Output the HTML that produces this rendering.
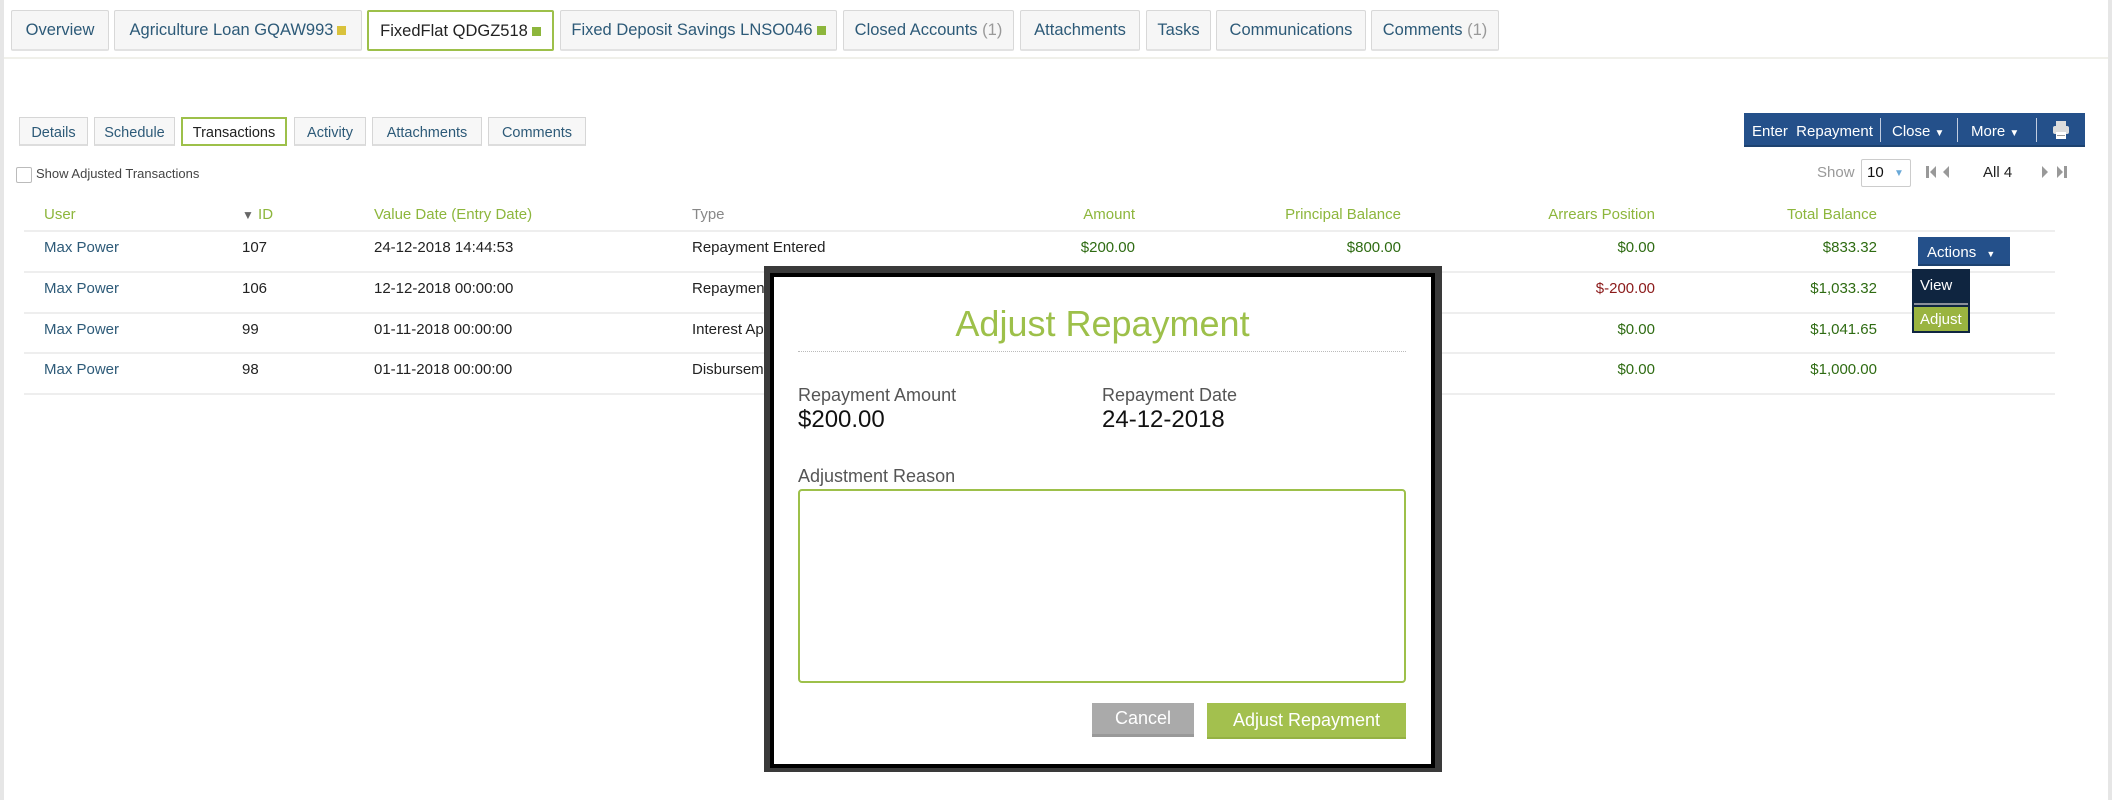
<!DOCTYPE html>
<html><head><meta charset="utf-8"><style>
*{box-sizing:border-box;margin:0;padding:0}
body{width:2112px;height:800px;background:#fff;font-family:"Liberation Sans",sans-serif;position:relative;overflow:hidden}
.a{position:absolute;white-space:nowrap}
.tab{position:absolute;top:10px;height:41px;border:1px solid #d8d8d8;border-bottom:2px solid #e2e2e2;background:#f6f6f6;color:#2d5a78;font-size:16.5px;line-height:39px;text-align:center;border-radius:2px}
.tab.on{background:#fff;border:2px solid #9dc04a;color:#222}
.sq{display:inline-block;width:9px;height:9px;margin-left:4px;vertical-align:0}
.st{position:absolute;top:117px;height:29px;border:1px solid #d6d6d6;border-bottom:2px solid #ddd;background:#f7f7f7;color:#2d5a78;font-size:14.5px;line-height:26px;padding-top:2px;text-align:center}
.st.on{background:#fff;border:2px solid #9dc04a;color:#222;padding-top:1px}
.sq{}
.h{position:absolute;top:206px;font-size:15px;color:#8db63c}
.c{position:absolute;font-size:15px;color:#222}
.u{color:#2d5a78}
.g{color:#2e6b12}
.r{text-align:right}
.ln{position:absolute;left:24px;width:2031px;height:2px;background:#eee}
</style></head><body>
<div class="a" style="left:0;top:0;width:4px;height:800px;background:#e6e6e6"></div>
<div class="a" style="left:2108px;top:0;width:4px;height:800px;background:#e6e6e6"></div>
<div class="tab" style="left:11px;width:98px">Overview</div>
<div class="tab" style="left:114px;width:248px">Agriculture Loan GQAW993<span class="sq" style="background:#d9c23c"></span></div>
<div class="tab on" style="left:367px;width:187px">FixedFlat QDGZ518<span class="sq" style="background:#8db63c"></span></div>
<div class="tab" style="left:560px;width:277px">Fixed Deposit Savings LNSO046<span class="sq" style="background:#8db63c"></span></div>
<div class="tab" style="left:843px;width:171px">Closed Accounts <span style="color:#999">(1)</span></div>
<div class="tab" style="left:1020px;width:120px">Attachments</div>
<div class="tab" style="left:1146px;width:65px">Tasks</div>
<div class="tab" style="left:1216px;width:150px">Communications</div>
<div class="tab" style="left:1371px;width:128px">Comments <span style="color:#999">(1)</span></div>
<div class="a" style="left:4px;top:57px;width:2104px;height:2px;background:#f0f0ea"></div>

<div class="st" style="left:19px;width:69px">Details</div>
<div class="st" style="left:94px;width:81px">Schedule</div>
<div class="st on" style="left:181px;width:106px">Transactions</div>
<div class="st" style="left:294px;width:72px">Activity</div>
<div class="st" style="left:372px;width:110px">Attachments</div>
<div class="st" style="left:488px;width:98px">Comments</div>

<div class="a" style="left:16px;top:167px;width:16px;height:16px;border:1px solid #bbb;border-radius:2px;background:#fff"></div>
<div class="a" style="left:36px;top:166px;font-size:13px;color:#444">Show Adjusted Transactions</div>

<div class="a" style="left:1744px;top:113px;width:341px;height:34px;background:#24508a;border-bottom:2px solid #1d4270;color:#fff;font-size:15px;line-height:32px">
 <span class="a" style="left:8px;top:3px">Enter&nbsp; Repayment</span>
 <span class="a" style="left:136px;top:5px;width:1px;height:24px;background:#c0cce0"></span>
 <span class="a" style="left:148px;top:3px">Close <span style="font-size:10px">▼</span></span>
 <span class="a" style="left:213px;top:5px;width:1px;height:24px;background:#c0cce0"></span>
 <span class="a" style="left:227px;top:3px">More <span style="font-size:10px">▼</span></span>
 <span class="a" style="left:292px;top:5px;width:1px;height:24px;background:#c0cce0"></span>
 <svg class="a" style="left:308px;top:7px" width="18" height="20" viewBox="0 0 18 20"><rect x="4" y="1" width="10" height="5" fill="#ddd"/><rect x="1" y="6" width="16" height="8" rx="2" fill="#ddd"/><rect x="4" y="12" width="10" height="7" fill="#fff"/><rect x="5" y="15" width="8" height="1" fill="#999"/></svg>
</div>
<div class="a" style="left:1817px;top:164px;font-size:15px;color:#999">Show</div>
<div class="a" style="left:1861px;top:159px;width:50px;height:28px;border:1px solid #ccc;border-radius:2px;font-size:15px;line-height:26px;padding-left:5px;color:#111">10<span style="position:absolute;left:32px;top:1px;color:#6aa9d8;font-size:10px">▼</span></div>
<svg class="a" style="left:1925px;top:165px" width="30" height="14"><rect x="1" y="1" width="3" height="12" fill="#999"/><path d="M5 7 L11 1 V13Z M18 7 L24 1 V13Z" fill="#999"/></svg>
<div class="a" style="left:1983px;top:164px;font-size:15px;color:#222">All 4</div>
<svg class="a" style="left:2040px;top:165px" width="32" height="14"><path d="M2 1 L8 7 L2 13Z M17 1 L23 7 L17 13Z" fill="#999"/><rect x="24" y="1" width="3" height="12" fill="#999"/></svg>

<div class="h" style="left:44px">User</div>
<div class="h" style="left:242px"><span style="color:#666;font-size:12px">▼</span> ID</div>
<div class="h" style="left:374px">Value Date (Entry Date)</div>
<div class="h" style="left:692px;color:#888">Type</div>
<div class="h r" style="right:977px">Amount</div>
<div class="h r" style="right:711px">Principal Balance</div>
<div class="h r" style="right:457px">Arrears Position</div>
<div class="h r" style="right:235px">Total Balance</div>
<div class="ln" style="top:230px"></div>
<div class="ln" style="top:271px"></div>
<div class="ln" style="top:312px"></div>
<div class="ln" style="top:352px"></div>
<div class="ln" style="top:393px"></div>

<div class="c u" style="left:44px;top:239px">Max Power</div><div class="c" style="left:242px;top:239px">107</div><div class="c" style="left:374px;top:239px">24-12-2018 14:44:53</div><div class="c" style="left:692px;top:239px">Repayment Entered</div>
<div class="c g" style="right:977px;top:239px">$200.00</div><div class="c g" style="right:711px;top:239px">$800.00</div><div class="c g" style="right:457px;top:239px">$0.00</div><div class="c g" style="right:235px;top:239px">$833.32</div>
<div class="c u" style="left:44px;top:280px">Max Power</div><div class="c" style="left:242px;top:280px">106</div><div class="c" style="left:374px;top:280px">12-12-2018 00:00:00</div><div class="c" style="left:692px;top:280px">Repayment</div>
<div class="c" style="right:457px;top:280px;color:#8b1a1a">$-200.00</div><div class="c g" style="right:235px;top:280px">$1,033.32</div>
<div class="c u" style="left:44px;top:321px">Max Power</div><div class="c" style="left:242px;top:321px">99</div><div class="c" style="left:374px;top:321px">01-11-2018 00:00:00</div><div class="c" style="left:692px;top:321px">Interest Ap</div>
<div class="c g" style="right:457px;top:321px">$0.00</div><div class="c g" style="right:235px;top:321px">$1,041.65</div>
<div class="c u" style="left:44px;top:361px">Max Power</div><div class="c" style="left:242px;top:361px">98</div><div class="c" style="left:374px;top:361px">01-11-2018 00:00:00</div><div class="c" style="left:692px;top:361px">Disbursem</div>
<div class="c g" style="right:457px;top:361px">$0.00</div><div class="c g" style="right:235px;top:361px">$1,000.00</div>

<div class="a" style="left:1918px;top:237px;width:92px;height:29px;background:#24508a;border-bottom:2px solid #1d4270;color:#fff;font-size:15px;line-height:27px;padding-left:9px;padding-top:2px">Actions <span style="font-size:9px;margin-left:6px">▼</span></div>
<div class="a" style="left:1912px;top:269px;width:58px;height:64px;background:#0f2540">
 <span class="a" style="left:8px;top:8px;color:#fff;font-size:15px">View</span>
 <span class="a" style="left:2px;top:34px;width:54px;height:2px;background:#8a8f99"></span>
 <span class="a" style="left:2px;top:38px;width:54px;height:24px;background:#9ab440;color:#fff;font-size:15px;line-height:25px;padding-left:6px">Adjust</span>
</div>

<div class="a" style="left:764px;top:266px;width:678px;height:506px;background:#3a3a3a"></div>
<div class="a" style="left:770px;top:273px;width:665px;height:495px;background:#000"></div>
<div class="a" style="left:774px;top:277px;width:657px;height:487px;background:#fff"></div>
<div class="a" style="left:773px;top:303px;width:659px;text-align:center;font-size:36px;color:#9dc04a">Adjust Repayment</div>
<div class="a" style="left:798px;top:351px;width:608px;border-top:1px dotted #bbb"></div>
<div class="a" style="left:798px;top:385px;font-size:18px;color:#555">Repayment Amount</div>
<div class="a" style="left:798px;top:406px;font-size:24px;color:#111">$200.00</div>
<div class="a" style="left:1102px;top:385px;font-size:18px;color:#555">Repayment Date</div>
<div class="a" style="left:1102px;top:406px;font-size:24px;color:#111">24-12-2018</div>
<div class="a" style="left:798px;top:466px;font-size:18px;color:#555">Adjustment Reason</div>
<div class="a" style="left:798px;top:489px;width:608px;height:194px;border:2px solid #9dc04a;border-radius:4px"></div>
<div class="a" style="left:1092px;top:703px;width:102px;height:34px;background:#aaa;border-bottom:3px solid #999;color:#fff;font-size:18px;line-height:31px;text-align:center">Cancel</div>
<div class="a" style="left:1207px;top:703px;width:199px;height:36px;background:#a3c04e;border-bottom:2px solid #94b143;color:#fff;font-size:18px;line-height:34px;text-align:center">Adjust Repayment</div>
</body></html>
